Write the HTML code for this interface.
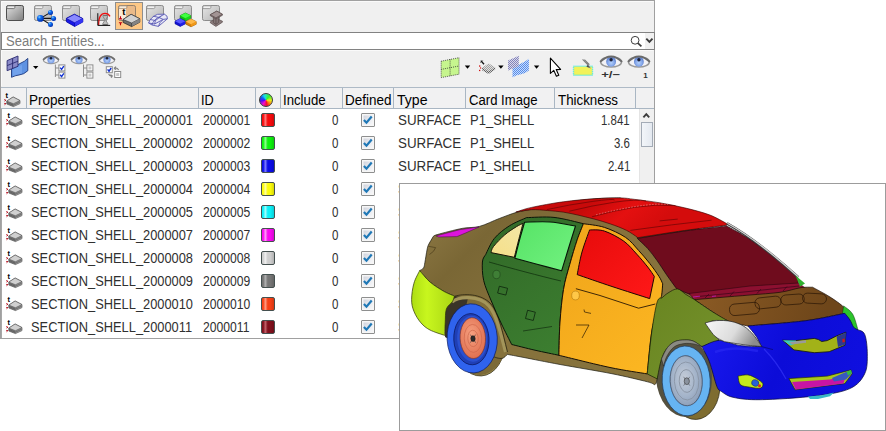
<!DOCTYPE html>
<html><head><meta charset="utf-8">
<style>
html,body{margin:0;padding:0;background:#fff;}
body{width:886px;height:431px;position:relative;overflow:hidden;font-family:"Liberation Sans",sans-serif;font-size:14px;color:#000;}
#panel{position:absolute;left:0;top:0;width:653px;height:337px;background:#f0f0f0;border:1px solid #a0a0a0;}
#search{position:absolute;left:1px;top:32px;width:652px;height:16px;background:#fff;border:1px solid #828282;}
#sdd{position:absolute;left:645px;top:33px;width:9px;height:16px;background:#f0f0f0;}
#hdr{position:absolute;left:1px;top:87px;width:653px;height:20px;background:#f1f1f2;border-top:1px solid #aebac6;border-bottom:1px solid #a9b6c3;}
.hs{position:absolute;top:88px;height:20px;width:1px;background:#a9b6c3;}
#rows{position:absolute;left:1px;top:109px;width:637px;height:229px;background:#fff;border-left:1px solid #a8a8a8;}
#sb{position:absolute;left:639px;top:109px;width:15px;height:229px;background:#f0f0f0;border-left:1px solid #e4e4e4;box-sizing:border-box;}
#thumb{position:absolute;left:641px;top:122px;width:10px;height:23px;border:1px solid #a3abb6;background:linear-gradient(90deg,#f2f5f9,#e4e9f0);}
.t{position:absolute;white-space:nowrap;line-height:20px;height:20px;transform-origin:0 0;}
.rt{color:#303030;}
.sw{position:absolute;left:261px;width:12px;height:12px;border:1px solid #44504f;border-radius:2px;}
.cb{position:absolute;left:361px;width:12px;height:12px;border:1px solid #8e8f8f;border-radius:1px;background:linear-gradient(135deg,#c8ccd6 0%,#e6e8ee 50%,#fbfbfc 100%);box-shadow:inset 0 0 0 1.5px #f6f6f6;}
.cb svg{position:absolute;left:0;top:0;}
#car{position:absolute;left:399px;top:183px;width:485px;height:246px;background:#fff;border:1px solid #9c9c9c;overflow:hidden;}
#tb{position:absolute;left:0;top:0;}
#cw{position:absolute;left:259px;top:93px;width:12px;height:12px;border:1px solid #3c3c3c;border-radius:50%;background:conic-gradient(#30e8a0 0deg,#30f030 40deg,#e8f020 95deg,#ff8010 135deg,#f01030 170deg,#f010d0 215deg,#5010f0 260deg,#1060f0 300deg,#10d8f0 335deg,#30e8a0 360deg);}
</style></head><body>
<div id="panel"></div>
<div id="search"></div><div id="sdd"></div>
<span class="t" style="left:5.57px;top:31px;transform:scaleX(0.9308);color:#7c7c7c;">Search Entities...</span>
<div id="hdr"></div>
<div class="hs" style="left:26px"></div>
<div class="hs" style="left:198px"></div>
<div class="hs" style="left:255px"></div>
<div class="hs" style="left:280px"></div>
<div class="hs" style="left:342px"></div>
<div class="hs" style="left:393px"></div>
<div class="hs" style="left:465px"></div>
<div class="hs" style="left:554px"></div>
<div class="hs" style="left:635px"></div>
<span class="t" style="left:28.58px;top:90px;transform:scaleX(0.9659);">Properties</span>
<span class="t" style="left:200.79px;top:90px;transform:scaleX(0.9077);">ID</span>
<span class="t" style="left:282.56px;top:90px;transform:scaleX(0.9432);">Include</span>
<span class="t" style="left:345.04px;top:90px;transform:scaleX(0.9628);">Defined</span>
<span class="t" style="left:396.95px;top:90px;transform:scaleX(1.0050);">Type</span>
<span class="t" style="left:468.50px;top:90px;transform:scaleX(0.9370);">Card Image</span>
<span class="t" style="left:558.10px;top:90px;transform:scaleX(0.9524);">Thickness</span>
<div id="rows"></div><div id="sb"></div><div id="thumb"></div>
<svg style="position:absolute;left:640px;top:110px" width="14" height="10" viewBox="640 110 14 10"><path d="M643.4 117.4 L646.3 114.2 L649.2 117.4" fill="none" stroke="#3c3c3c" stroke-width="1.9"/></svg>
<span class="t rt" style="left:30.78px;top:110px;transform:scaleX(0.9170);">SECTION_SHELL_2000001</span>
<span class="t rt" style="left:203.10px;top:110px;transform:scaleX(0.8685);">2000001</span>
<i class="sw" style="top:113px;background:linear-gradient(90deg,#f60a0c 0%,#f60a0c 10%,#ff7a7a 28%,#f60a0c 48%,#f60a0c 70%,#d3080a 100%)"></i>
<span class="t rt" style="left:331.90px;top:110px;transform:scaleX(0.8250);">0</span>
<i class="cb" style="top:113px"><svg width="12" height="12" viewBox="0 0 12 12"><path d="M1.9 5.9 L4.5 8.7 L9.7 2.5" fill="none" stroke="#1f78b6" stroke-width="2.2"/></svg></i>
<span class="t rt" style="left:397.54px;top:110px;transform:scaleX(0.9554);">SURFACE</span>
<span class="t rt" style="left:469.67px;top:110px;transform:scaleX(0.9287);">P1_SHELL</span>
<span class="t rt" style="left:601.43px;top:110px;transform:scaleX(0.8162);">1.841</span>
<span class="t rt" style="left:30.78px;top:133px;transform:scaleX(0.9170);">SECTION_SHELL_2000002</span>
<span class="t rt" style="left:203.10px;top:133px;transform:scaleX(0.8685);">2000002</span>
<i class="sw" style="top:136px;background:linear-gradient(90deg,#0cf00c 0%,#0cf00c 10%,#8cff8c 28%,#0cf00c 48%,#0cf00c 70%,#0ace0a 100%)"></i>
<span class="t rt" style="left:331.90px;top:133px;transform:scaleX(0.8250);">0</span>
<i class="cb" style="top:136px"><svg width="12" height="12" viewBox="0 0 12 12"><path d="M1.9 5.9 L4.5 8.7 L9.7 2.5" fill="none" stroke="#1f78b6" stroke-width="2.2"/></svg></i>
<span class="t rt" style="left:397.54px;top:133px;transform:scaleX(0.9554);">SURFACE</span>
<span class="t rt" style="left:469.67px;top:133px;transform:scaleX(0.9287);">P1_SHELL</span>
<span class="t rt" style="left:614.49px;top:133px;transform:scaleX(0.8162);">3.6</span>
<span class="t rt" style="left:30.78px;top:156px;transform:scaleX(0.9170);">SECTION_SHELL_2000003</span>
<span class="t rt" style="left:203.10px;top:156px;transform:scaleX(0.8685);">2000003</span>
<i class="sw" style="top:159px;background:linear-gradient(90deg,#0a0ce6 0%,#0a0ce6 10%,#7a7aff 28%,#0a0ce6 48%,#0a0ce6 70%,#080ac5 100%)"></i>
<span class="t rt" style="left:331.90px;top:156px;transform:scaleX(0.8250);">0</span>
<i class="cb" style="top:159px"><svg width="12" height="12" viewBox="0 0 12 12"><path d="M1.9 5.9 L4.5 8.7 L9.7 2.5" fill="none" stroke="#1f78b6" stroke-width="2.2"/></svg></i>
<span class="t rt" style="left:397.54px;top:156px;transform:scaleX(0.9554);">SURFACE</span>
<span class="t rt" style="left:469.67px;top:156px;transform:scaleX(0.9287);">P1_SHELL</span>
<span class="t rt" style="left:607.96px;top:156px;transform:scaleX(0.8162);">2.41</span>
<span class="t rt" style="left:30.78px;top:179px;transform:scaleX(0.9170);">SECTION_SHELL_2000004</span>
<span class="t rt" style="left:203.10px;top:179px;transform:scaleX(0.8685);">2000004</span>
<i class="sw" style="top:182px;background:linear-gradient(90deg,#fbfb0a 0%,#fbfb0a 10%,#ffffa0 28%,#fbfb0a 48%,#fbfb0a 70%,#d7d708 100%)"></i>
<span class="t rt" style="left:331.90px;top:179px;transform:scaleX(0.8250);">0</span>
<i class="cb" style="top:182px"><svg width="12" height="12" viewBox="0 0 12 12"><path d="M1.9 5.9 L4.5 8.7 L9.7 2.5" fill="none" stroke="#1f78b6" stroke-width="2.2"/></svg></i>
<span class="t rt" style="left:397.54px;top:179px;transform:scaleX(0.9554);">SURFACE</span>
<span class="t rt" style="left:469.67px;top:179px;transform:scaleX(0.9287);">P1_SHELL</span>
<span class="t rt" style="left:30.78px;top:202px;transform:scaleX(0.9170);">SECTION_SHELL_2000005</span>
<span class="t rt" style="left:203.10px;top:202px;transform:scaleX(0.8685);">2000005</span>
<i class="sw" style="top:205px;background:linear-gradient(90deg,#0af0f8 0%,#0af0f8 10%,#a0ffff 28%,#0af0f8 48%,#0af0f8 70%,#08ced5 100%)"></i>
<span class="t rt" style="left:331.90px;top:202px;transform:scaleX(0.8250);">0</span>
<i class="cb" style="top:205px"><svg width="12" height="12" viewBox="0 0 12 12"><path d="M1.9 5.9 L4.5 8.7 L9.7 2.5" fill="none" stroke="#1f78b6" stroke-width="2.2"/></svg></i>
<span class="t rt" style="left:397.54px;top:202px;transform:scaleX(0.9554);">SURFACE</span>
<span class="t rt" style="left:469.67px;top:202px;transform:scaleX(0.9287);">P1_SHELL</span>
<span class="t rt" style="left:30.78px;top:225px;transform:scaleX(0.9170);">SECTION_SHELL_2000007</span>
<span class="t rt" style="left:203.10px;top:225px;transform:scaleX(0.8685);">2000007</span>
<i class="sw" style="top:228px;background:linear-gradient(90deg,#f80af0 0%,#f80af0 10%,#ff9cf8 28%,#f80af0 48%,#f80af0 70%,#d508ce 100%)"></i>
<span class="t rt" style="left:331.90px;top:225px;transform:scaleX(0.8250);">0</span>
<i class="cb" style="top:228px"><svg width="12" height="12" viewBox="0 0 12 12"><path d="M1.9 5.9 L4.5 8.7 L9.7 2.5" fill="none" stroke="#1f78b6" stroke-width="2.2"/></svg></i>
<span class="t rt" style="left:397.54px;top:225px;transform:scaleX(0.9554);">SURFACE</span>
<span class="t rt" style="left:469.67px;top:225px;transform:scaleX(0.9287);">P1_SHELL</span>
<span class="t rt" style="left:30.78px;top:248px;transform:scaleX(0.9170);">SECTION_SHELL_2000008</span>
<span class="t rt" style="left:203.10px;top:248px;transform:scaleX(0.8685);">2000008</span>
<i class="sw" style="top:251px;background:linear-gradient(90deg,#cecece 0%,#cecece 10%,#f0f0f0 28%,#cecece 48%,#cecece 70%,#b1b1b1 100%)"></i>
<span class="t rt" style="left:331.90px;top:248px;transform:scaleX(0.8250);">0</span>
<i class="cb" style="top:251px"><svg width="12" height="12" viewBox="0 0 12 12"><path d="M1.9 5.9 L4.5 8.7 L9.7 2.5" fill="none" stroke="#1f78b6" stroke-width="2.2"/></svg></i>
<span class="t rt" style="left:397.54px;top:248px;transform:scaleX(0.9554);">SURFACE</span>
<span class="t rt" style="left:469.67px;top:248px;transform:scaleX(0.9287);">P1_SHELL</span>
<span class="t rt" style="left:30.78px;top:271px;transform:scaleX(0.9170);">SECTION_SHELL_2000009</span>
<span class="t rt" style="left:203.10px;top:271px;transform:scaleX(0.8685);">2000009</span>
<i class="sw" style="top:274px;background:linear-gradient(90deg,#767676 0%,#767676 10%,#b0b0b0 28%,#767676 48%,#767676 70%,#656565 100%)"></i>
<span class="t rt" style="left:331.90px;top:271px;transform:scaleX(0.8250);">0</span>
<i class="cb" style="top:274px"><svg width="12" height="12" viewBox="0 0 12 12"><path d="M1.9 5.9 L4.5 8.7 L9.7 2.5" fill="none" stroke="#1f78b6" stroke-width="2.2"/></svg></i>
<span class="t rt" style="left:397.54px;top:271px;transform:scaleX(0.9554);">SURFACE</span>
<span class="t rt" style="left:469.67px;top:271px;transform:scaleX(0.9287);">P1_SHELL</span>
<span class="t rt" style="left:30.78px;top:294px;transform:scaleX(0.9170);">SECTION_SHELL_2000010</span>
<span class="t rt" style="left:203.10px;top:294px;transform:scaleX(0.8685);">2000010</span>
<i class="sw" style="top:297px;background:linear-gradient(90deg,#f64016 0%,#f64016 10%,#ff9a80 28%,#f64016 48%,#f64016 70%,#d33712 100%)"></i>
<span class="t rt" style="left:331.90px;top:294px;transform:scaleX(0.8250);">0</span>
<i class="cb" style="top:297px"><svg width="12" height="12" viewBox="0 0 12 12"><path d="M1.9 5.9 L4.5 8.7 L9.7 2.5" fill="none" stroke="#1f78b6" stroke-width="2.2"/></svg></i>
<span class="t rt" style="left:397.54px;top:294px;transform:scaleX(0.9554);">SURFACE</span>
<span class="t rt" style="left:469.67px;top:294px;transform:scaleX(0.9287);">P1_SHELL</span>
<span class="t rt" style="left:30.78px;top:317px;transform:scaleX(0.9170);">SECTION_SHELL_2000011</span>
<span class="t rt" style="left:203.10px;top:317px;transform:scaleX(0.8685);">2000011</span>
<i class="sw" style="top:320px;background:linear-gradient(90deg,#80101c 0%,#80101c 10%,#c06068 28%,#80101c 48%,#80101c 70%,#6e0d18 100%)"></i>
<span class="t rt" style="left:331.90px;top:317px;transform:scaleX(0.8250);">0</span>
<i class="cb" style="top:320px"><svg width="12" height="12" viewBox="0 0 12 12"><path d="M1.9 5.9 L4.5 8.7 L9.7 2.5" fill="none" stroke="#1f78b6" stroke-width="2.2"/></svg></i>
<span class="t rt" style="left:397.54px;top:317px;transform:scaleX(0.9554);">SURFACE</span>
<span class="t rt" style="left:469.67px;top:317px;transform:scaleX(0.9287);">P1_SHELL</span>
<svg id="tb" width="655" height="87" viewBox="0 0 655 87">
<defs>
<linearGradient id="fg" x1="0" y1="0" x2="1" y2="1"><stop offset="0" stop-color="#e2e2e2"/><stop offset="1" stop-color="#7e7e7e"/></linearGradient>
<linearGradient id="ff" x1="0" y1="0" x2="1" y2="1"><stop offset="0" stop-color="#e6e6e6"/><stop offset="1" stop-color="#b4b4b4"/></linearGradient>
<radialGradient id="bs" cx="0.35" cy="0.3" r="0.7"><stop offset="0" stop-color="#7fd0ff"/><stop offset="0.35" stop-color="#1070f0"/><stop offset="1" stop-color="#0030b0"/></radialGradient>
<radialGradient id="iris" cx="0.5" cy="0.6" r="0.6"><stop offset="0" stop-color="#b4d0fa"/><stop offset="0.55" stop-color="#86a8ea"/><stop offset="1" stop-color="#4c70c4"/></radialGradient>
<g id="folder"><rect x="0.5" y="0.5" width="17" height="15" rx="1.8" fill="url(#fg)" stroke="#4e4e4e"/><path d="M0.8 3.6 H7.6 Q8.6 3.6 8.8 2.6 L9 0.8 H2 Q0.8 0.8 0.8 2 Z" fill="#ececec" stroke="#5a5a5a" stroke-width="0.8"/></g>
<g id="folderf"><rect x="0.5" y="0.5" width="17" height="15" rx="1.8" fill="url(#ff)" stroke="#8c8c8c"/><path d="M0.8 3.6 H7.6 Q8.6 3.6 8.8 2.6 L9 0.8 H2 Q0.8 0.8 0.8 2 Z" fill="#f2f2f2" stroke="#8a8a8a" stroke-width="0.8"/></g>
<g id="eye"><ellipse cx="0" cy="0" rx="7.6" ry="3.8" fill="#f2f2f6" stroke="#9a9a9a" stroke-width="1.2"/><circle cx="0" cy="-0.1" r="3.6" fill="url(#iris)"/><circle cx="0" cy="-1.7" r="1.3" fill="#1a2038"/><path d="M-8 0 Q-4 -3.9 0 -3.9 Q4 -3.9 8 0" fill="none" stroke="#6e6e6e" stroke-width="1.5"/></g>
<g id="eyeL"><ellipse cx="0" cy="0" rx="10.4" ry="5.2" fill="#f2f2f6" stroke="#9a9a9a" stroke-width="1.5"/><circle cx="0" cy="-0.1" r="4.9" fill="url(#iris)"/><circle cx="0" cy="-2.2" r="1.7" fill="#1a2038"/><path d="M-11 0 Q-5.5 -5.4 0 -5.4 Q5.5 -5.4 11 0" fill="none" stroke="#6a6a6a" stroke-width="1.9"/></g>
<g id="chk"><rect x="0.5" y="0.5" width="6" height="6" fill="#fff" stroke="#8c8c8c"/><path d="M1.8 3.2 L3.2 5 L5.4 1.8" fill="none" stroke="#1030d0" stroke-width="1.4"/></g>
<g id="unchk"><rect x="0.5" y="0.5" width="6" height="6" fill="#fff" stroke="#8c8c8c"/><rect x="2" y="2" width="3" height="3" fill="#c8c8c8"/></g>
<path id="dd" d="M0 0 H5.4 L2.7 3.2 Z" fill="#000"/>
<pattern id="dg" width="2" height="2" patternUnits="userSpaceOnUse"><rect width="2" height="2" fill="#d4d4d4"/><rect width="1" height="1" fill="#606060"/><rect x="1" y="1" width="1" height="1" fill="#606060"/></pattern>
<pattern id="dp" width="2" height="2" patternUnits="userSpaceOnUse"><rect width="2" height="2" fill="#d8d8ec"/><rect width="1" height="1" fill="#8484b8"/><rect x="1" y="1" width="1" height="1" fill="#8484b8"/></pattern>
<pattern id="db" width="2" height="2" patternUnits="userSpaceOnUse"><rect width="2" height="2" fill="#c4dcff"/><rect width="1" height="1" fill="#5a8ce6"/><rect x="1" y="1" width="1" height="1" fill="#5a8ce6"/></pattern>
</defs>
<path d="M1.5 31.5 V1.5 H653.5" fill="none" stroke="#fafafa"/>
<path d="M1.5 86 V50.5 H653.5" fill="none" stroke="#fafafa"/>
<use href="#folder" x="6" y="5"/>
<use href="#folderf" x="34" y="5"/>
<path d="M40.4 18.4 L50.5 12.4 M40.4 18.4 H53.6 M40.4 18.4 L50.5 24.5" stroke="#111" stroke-width="1.1"/>
<circle cx="40.4" cy="18.4" r="3.4" fill="url(#bs)"/><circle cx="50.5" cy="12.4" r="2.5" fill="url(#bs)"/><circle cx="53.6" cy="18.4" r="2.5" fill="url(#bs)"/><circle cx="50.5" cy="24.5" r="2.5" fill="url(#bs)"/>
<use href="#folderf" x="62" y="5"/>
<path d="M66.4 18.4 L74.4 14.3 L82.8 18.6 L82.8 22 L74.6 26.4 L66.4 21.8 Z" fill="#1818e6" stroke="#0000a0" stroke-width="0.8" stroke-linejoin="round"/>
<path d="M66.4 18.4 L74.4 14.3 L82.8 18.6 L74.6 22.8 Z" fill="#8a8aff" stroke="#0000a0" stroke-width="0.6" stroke-linejoin="round"/>
<path d="M74.6 22.8 L82.8 18.6 L82.8 22 L74.6 26.4 Z" fill="#3434f4"/><path d="M74.6 22.8 V26.4" stroke="#0000a0" stroke-width="0.6"/>
<use href="#folderf" x="90" y="5"/>
<path d="M103 15.4 H107.6 V16.4 L105.9 19.4 V20.6 L107.8 23.6 V24.8 H102.8 V23.6 L104.7 20.6 V19.4 L103 16.4 Z" fill="#c0c0c0" stroke="#7a7a7a" stroke-width="0.8"/><path d="M103.4 15.6 H107.2 M103.2 24.6 H107.4" stroke="#6a6a6a" stroke-width="0.9"/>
<path d="M98.6 25 C98.6 16 101.5 13.4 105 13.4 C107.5 13.4 109.2 14.8 110 16.4" fill="none" stroke="#f01010" stroke-width="1.3"/>
<path d="M97.8 13.2 V25.4 H110.2" fill="none" stroke="#111" stroke-width="1"/>
<rect x="115.5" y="2.5" width="27" height="27" fill="#fdc886" stroke="#8e8e8e"/>
<g opacity="0.9"><rect x="118.5" y="5.5" width="17" height="15" rx="1.8" fill="#e9b98a" stroke="#8a7a6a"/><path d="M118.8 8.6 H125.6 Q126.6 8.6 126.8 7.6 L127 5.8 H120 Q118.8 5.8 118.8 7 Z" fill="#f6efe6" stroke="#8a7a6a" stroke-width="0.8"/><rect x="119" y="8.8" width="7" height="11.2" fill="#fbf3ea" opacity="0.9"/></g>
<text x="122.2" y="15.2" font-family="Liberation Sans, sans-serif" font-weight="bold" font-size="9.5" fill="#000">t</text>
<path d="M120.5 16.2 V18.8 M118.9 18.9 H122.1 M118.9 22.7 H122.1 M120.5 22.8 V25.2" fill="none" stroke="#c00010" stroke-width="1.1"/>
<path d="M123.1 19.5 L131.1 14.3 L139.8 18.8 L139.8 22.2 L131.6 26.6 L123.1 22.4 Z" fill="#6e6e6e" stroke="#2e2e2e" stroke-width="0.8" stroke-linejoin="round"/>
<path d="M123.1 19.5 L131.1 14.3 L139.8 18.8 L131.6 23 Z" fill="#d2d2d2" stroke="#2e2e2e" stroke-width="0.6" stroke-linejoin="round"/>
<path d="M131.6 23 L139.8 18.8 L139.8 22.2 L131.6 26.6 Z" fill="#848484"/><path d="M131.6 23 V26.6" stroke="#2e2e2e" stroke-width="0.6"/>
<use href="#folderf" x="146" y="5"/>
<g fill="none" stroke="#5a5ab4" stroke-width="0.9" stroke-linejoin="round"><path d="M148.6 23 Q150.5 17 157.6 14.3 L164.4 14.2 Q168 15.6 167.4 18.8 L158.4 26.4 L152 25 Z" fill="#e8e8f6"/><path d="M152 25 Q153.2 19.6 160.4 16.4 L164.4 14.2 M158.4 26.4 Q159.6 22 163 19.6 M150 19.4 L155.4 20.6 L161.4 16 M153.4 16.2 L158.6 17.4 M148.6 23 L154.6 24 L163.2 19.4 L167.4 18.8 M155.4 20.6 L154.6 24 M158.6 17.4 L163.2 19.4"/></g>
<use href="#folderf" x="174" y="5"/>
<path d="M180.20000000000002 15.6 L185.4 13.0 L190.6 15.6 L190.6 18.2 L185.4 20.8 L180.20000000000002 18.2 Z" fill="#10c010" stroke="#087008" stroke-width="0.6" stroke-linejoin="round"/><path d="M185.4 18.2 L190.6 15.6 L190.6 18.2 L185.4 20.8 Z" fill="#18d818"/><path d="M180.20000000000002 15.6 L185.4 13.0 L190.6 15.6 L185.4 18.2 Z" fill="#40ff40"/>
<path d="M175.0 21.2 L180.2 18.599999999999998 L185.39999999999998 21.2 L185.39999999999998 23.8 L180.2 26.400000000000002 L175.0 23.8 Z" fill="#1010d0" stroke="#000090" stroke-width="0.6" stroke-linejoin="round"/><path d="M180.2 23.8 L185.39999999999998 21.2 L185.39999999999998 23.8 L180.2 26.400000000000002 Z" fill="#2020e8"/><path d="M175.0 21.2 L180.2 18.599999999999998 L185.39999999999998 21.2 L180.2 23.8 Z" fill="#5858ff"/>
<path d="M185.8 21.6 L191 19.0 L196.2 21.6 L196.2 24.200000000000003 L191 26.800000000000004 L185.8 24.200000000000003 Z" fill="#d88008" stroke="#905000" stroke-width="0.6" stroke-linejoin="round"/><path d="M191 24.200000000000003 L196.2 21.6 L196.2 24.200000000000003 L191 26.800000000000004 Z" fill="#f09818"/><path d="M185.8 21.6 L191 19.0 L196.2 21.6 L191 24.200000000000003 Z" fill="#ffb848"/>
<use href="#folderf" x="202" y="5"/>
<g stroke="#5a4c4c" stroke-width="0.7" stroke-linejoin="round"><path d="M210.3 21.8 L216.6 18.6 L222.4 21.2 V22.2 L215.9 26.4 L210.3 22.8 Z" fill="#8c7e7e"/><path d="M213.4 16.4 V22.8 L215.9 24.4 L218.6 22.6 V16.4 Z" fill="#837676"/><path d="M215.9 18 V24.4" fill="none"/><path d="M210.3 14.7 L216.8 11.1 L222.4 14.3 V15.3 L215.9 18.8 L210.3 15.7 Z" fill="#8c7e7e"/><path d="M210.3 14.7 L216.8 11.1 L222.4 14.3 L215.9 17.8 Z" fill="#a29494"/></g>
<circle cx="635.1" cy="40.3" r="3.9" fill="none" stroke="#3c3c3c" stroke-width="1"/><path d="M637.9 43.2 L641.4 46.4" stroke="#3c3c3c" stroke-width="1.7"/>
<path d="M646.3 38.6 L649.4 41.8 L652.5 38.6" fill="none" stroke="#3a3a3a" stroke-width="1.9"/>
<path d="M11.5 69 Q16 65.5 20 63.5 Q25 61.5 27.8 58.4 V70.7 Q24 74.5 19 75 Q15 75.5 11.5 77.3 Z" fill="#5e92e2" stroke="#1e3a80" stroke-width="0.9" stroke-linejoin="round"/>
<path d="M13 69.5 Q18 66 22 65 V73.6 Q17 74.4 13 76 Z" fill="#7aaaf0" opacity="0.7"/>
<path d="M7.1 60.6 L18 56 V66.3 L7.1 70.7 Z" fill="#8a8ac8" stroke="#2a2a70" stroke-width="0.9" stroke-linejoin="round"/><path d="M12.6 58.3 V68.5 M7.1 65.6 L18 61.2" stroke="#2a2a70" stroke-width="0.9"/>
<use href="#dd" x="33" y="65.9"/>
<use href="#eye" x="51" y="59.9"/><path d="M55.4 64.5 V77 M55.4 68 H59 M55.4 75 H59" stroke="#8c8c8c" stroke-width="1" fill="none"/><use href="#chk" x="58.4" y="64.4"/><use href="#chk" x="58.4" y="71.6"/>
<use href="#eye" x="79" y="59.9"/><path d="M83.5 64.5 V77 M83.5 68 H87 M83.5 75 H87" stroke="#8c8c8c" stroke-width="1" fill="none"/><use href="#unchk" x="86.4" y="64.4"/><use href="#unchk" x="86.4" y="71.6"/>
<use href="#eye" x="107" y="59.9"/><use href="#chk" x="105.8" y="66.2"/><use href="#unchk" x="114.2" y="71"/>
<path d="M114 68.4 Q117 67 118.6 70 M114 68.4 L116 66.6 M114 68.4 L116.2 69.6 M112.6 76 Q109.6 76.6 108.6 74 M112.6 76 L110.4 74.6 M112.6 76 L111 77.6" fill="none" stroke="#808080" stroke-width="1.1"/>
<path d="M441.2 61.2 L459 57.7 V74.2 L441.2 77.6 Z" fill="#c6f58e"/><path d="M441.2 61.2 L459 57.7 V74.2 L441.2 77.6 Z M450.1 59.4 V75.9 M441.2 69.4 L459 66" fill="none" stroke="#333" stroke-width="0.8" stroke-dasharray="1 1"/>
<use href="#dd" x="464.8" y="65.5"/>
<path d="M482 68 L488.6 63.6 L495.2 67.4 V69.6 L488.6 74 L482 70.2 Z" fill="url(#dg)"/><path d="M482 68 L488.6 63.6 L495.2 67.4 L488.6 71.4 Z" fill="#f0f0f0" opacity="0.45"/>
<path d="M480.8 60.6 L484 64.2" stroke="#111" stroke-width="1.3"/><path d="M480.6 62.6 L482.6 60.6" stroke="#111" stroke-width="0.9"/><rect x="479" y="65.4" width="1.3" height="1.3" fill="#d01010"/><rect x="480" y="67.4" width="1.2" height="1.2" fill="#d01010"/><rect x="479" y="69.8" width="1.3" height="1.3" fill="#d01010"/>
<use href="#dd" x="498.2" y="65.5"/>
<path d="M512.5 68.6 Q517 65 521 63.4 Q526 61.4 528.9 58.8 V70.4 Q525 74 520 74.6 Q516 75.2 512.5 77.4 Z" fill="url(#db)"/>
<path d="M508 60.4 L518.8 55.8 V66.2 L508 70.6 Z" fill="url(#dp)"/>
<use href="#dd" x="533.9" y="65.5"/>
<path d="M550.4 58.2 V73.4 L553.8 70.4 L556.4 76.2 L558.8 75.2 L556.2 69.6 L560.6 69.4 Z" fill="#fff" stroke="#000" stroke-width="1.1" stroke-linejoin="round"/>
<rect x="573.5" y="66.3" width="19" height="9" fill="#f2f25a" stroke="#40e8f0" stroke-width="1.4" stroke-dasharray="1 1"/>
<path d="M582.6 59.4 L588.4 65.4 M584.4 59.6 L589.4 64.6 M586.4 62.4 L589.6 67.4 L587 66.4" fill="none" stroke="#808080" stroke-width="1.1"/><path d="M587.4 65 L589.6 67.6 L586.4 66.6 Z" fill="#404040"/>
<use href="#eyeL" x="611.1" y="61.9"/><use href="#eyeL" x="638.9" y="61.9"/>
<text x="601.2" y="78.4" font-family="Liberation Sans, sans-serif" font-weight="bold" font-size="9.5" fill="#333" textLength="19" lengthAdjust="spacingAndGlyphs">+/−</text>
<text x="643.2" y="78" font-family="Liberation Sans, sans-serif" font-weight="bold" font-size="8" fill="#333">1</text>
</svg>
<svg style="position:absolute;left:0;top:88px" width="30" height="250" viewBox="0 88 30 250"><defs><g id="pi"><text x="1.6" y="4.2" font-family="Liberation Sans, sans-serif" font-weight="bold" font-size="7.5" fill="#000">t</text><path d="M0.2 5.6 L1.9 6.2 L0.6 7.2 M0.2 9.4 L1.9 9.6 L0.5 10.8" fill="none" stroke="#b00010" stroke-width="0.9"/><path d="M2.8 7.1 L9.1 3 L16 6.6 V9.6 L9.4 12.6 L2.8 10 Z" fill="#787878" stroke="#404040" stroke-width="0.6" stroke-linejoin="round"/><path d="M9.4 9.7 L16 6.6 V9.6 L9.4 12.6 Z" fill="#929292"/><path d="M2.8 7.1 L9.1 3 L16 6.6 L9.4 9.7 Z" fill="#d0d0d0" stroke="#4a4a4a" stroke-width="0.5" stroke-linejoin="round"/><path d="M3 8.6 L9.4 11.2 L15.9 8.1" fill="none" stroke="#4a4a4a" stroke-width="0.5"/></g></defs><use href="#pi" x="4" y="94"/><use href="#pi" x="6" y="114"/><use href="#pi" x="6" y="137"/><use href="#pi" x="6" y="160"/><use href="#pi" x="6" y="183"/><use href="#pi" x="6" y="206"/><use href="#pi" x="6" y="229"/><use href="#pi" x="6" y="252"/><use href="#pi" x="6" y="275"/><use href="#pi" x="6" y="298"/><use href="#pi" x="6" y="321"/></svg>
<div id="cw"></div>
<div id="car"><svg style="position:absolute;left:0;top:0" width="485" height="246" viewBox="400 184 485 246"><defs>
<linearGradient id="gBody" x1="420" y1="230" x2="520" y2="330" gradientUnits="userSpaceOnUse"><stop offset="0" stop-color="#8a7642"/><stop offset="0.35" stop-color="#7a6735"/><stop offset="1" stop-color="#86723c"/></linearGradient>
<linearGradient id="gRoof" x1="600" y1="195" x2="640" y2="240" gradientUnits="userSpaceOnUse"><stop offset="0" stop-color="#c80a0a"/><stop offset="0.5" stop-color="#e41010"/><stop offset="1" stop-color="#d40c0c"/></linearGradient>
<linearGradient id="gHood" x1="700" y1="290" x2="820" y2="330" gradientUnits="userSpaceOnUse"><stop offset="0" stop-color="#8a5a24"/><stop offset="1" stop-color="#6e461a"/></linearGradient>
<linearGradient id="gBump" x1="412" y1="300" x2="455" y2="300" gradientUnits="userSpaceOnUse"><stop offset="0" stop-color="#aede14"/><stop offset="0.35" stop-color="#c8f61e"/><stop offset="1" stop-color="#a8d414"/></linearGradient>
<linearGradient id="gQG" x1="495" y1="255" x2="522" y2="225" gradientUnits="userSpaceOnUse"><stop offset="0" stop-color="#f6e08a"/><stop offset="1" stop-color="#f2e6a6"/></linearGradient>
<linearGradient id="gRD" x1="490" y1="250" x2="560" y2="350" gradientUnits="userSpaceOnUse"><stop offset="0" stop-color="#336c29"/><stop offset="1" stop-color="#3c7e30"/></linearGradient>
<linearGradient id="gRW" x1="520" y1="225" x2="565" y2="270" gradientUnits="userSpaceOnUse"><stop offset="0" stop-color="#58e468"/><stop offset="1" stop-color="#70f07e"/></linearGradient>
<linearGradient id="gFD" x1="560" y1="280" x2="660" y2="380" gradientUnits="userSpaceOnUse"><stop offset="0" stop-color="#f2a81c"/><stop offset="1" stop-color="#fdb822"/></linearGradient>
<linearGradient id="gFG" x1="585" y1="230" x2="650" y2="300" gradientUnits="userSpaceOnUse"><stop offset="0" stop-color="#e80c0c"/><stop offset="1" stop-color="#ff1818"/></linearGradient>
<linearGradient id="gFen" x1="660" y1="295" x2="720" y2="345" gradientUnits="userSpaceOnUse"><stop offset="0" stop-color="#6a8622"/><stop offset="1" stop-color="#73902a"/></linearGradient>
<linearGradient id="gFB" x1="700" y1="330" x2="860" y2="400" gradientUnits="userSpaceOnUse"><stop offset="0" stop-color="#1a1af0"/><stop offset="0.5" stop-color="#0c0cd8"/><stop offset="1" stop-color="#1010e0"/></linearGradient>
<linearGradient id="gHL" x1="710" y1="322" x2="750" y2="348" gradientUnits="userSpaceOnUse"><stop offset="0" stop-color="#f4f4f4"/><stop offset="0.55" stop-color="#dcdcdc"/><stop offset="1" stop-color="#8c8c8c"/></linearGradient>
<radialGradient id="gHubR" cx="0.45" cy="0.4" r="0.6"><stop offset="0" stop-color="#f6a080"/><stop offset="1" stop-color="#e07050"/></radialGradient>
<radialGradient id="gHubF" cx="0.45" cy="0.45" r="0.6"><stop offset="0" stop-color="#c4ccd8"/><stop offset="0.6" stop-color="#a4b4ca"/><stop offset="1" stop-color="#8a9cb6"/></radialGradient>
</defs><ellipse cx="479.5" cy="341" rx="25.5" ry="35" transform="rotate(-3 479.5 341)" fill="#9a8a48" stroke="#2a2410" stroke-width="0.7" />
<ellipse cx="694.5" cy="384" rx="25.5" ry="35.5" transform="rotate(-3 694.5 384)" fill="#7e6c30" stroke="#2a2410" stroke-width="0.7" />
<ellipse cx="478" cy="335" rx="29" ry="40" transform="rotate(-4 478 335)" fill="#7c6a38" />
<ellipse cx="684" cy="377" rx="28" ry="40" transform="rotate(-4 684 377)" fill="#55513f" />
<path d="M433.2 236.6L433.2 236.6C433.9 236.3 432.4 236.0 437.2 234.6C442.0 233.2 455.1 229.8 462.1 228.4C469.2 227.0 473.3 228.1 479.5 226.4C485.7 224.8 493.1 220.8 499.3 218.5C505.5 216.2 511.3 213.8 516.7 212.3C522.1 210.8 526.2 210.3 531.6 209.3C537.0 208.3 542.0 207.5 549.0 206.1C556.0 204.7 565.5 202.3 573.8 201.1C582.1 199.8 591.0 199.1 598.7 198.6C606.4 198.1 616.5 198.0 620.0 197.9L620.0 197.9C633.3 203.2 686.2 213.2 700.0 230.0C713.8 246.8 708.8 287.0 703.0 299.0C697.2 311.0 672.6 288.7 665.0 302.0C657.4 315.3 658.5 366.1 657.2 378.9L657.2 378.9C656.8 379.8 656.6 384.0 655.0 384.5C653.4 385.0 654.7 383.6 647.5 381.8C640.3 380.0 626.5 376.6 611.9 373.7C597.3 370.8 574.8 367.2 560.1 364.5C545.5 361.8 532.8 359.2 524.0 357.5C515.2 355.8 510.1 354.9 507.3 354.4L507.3 354.4C506.2 355.1 504.2 358.7 501.0 358.5C497.8 358.3 493.2 357.4 488.0 353.0C482.8 348.6 475.8 341.6 470.0 332.0C464.2 322.4 456.2 301.8 453.4 295.7L453.4 295.7C451.8 295.0 448.0 293.8 444.1 291.5C440.2 289.2 434.3 285.7 430.2 282.2C426.1 278.7 421.4 272.5 419.7 270.6L419.7 270.6C420.3 270.2 422.6 269.4 423.5 268.0C424.4 266.6 424.3 265.4 424.9 262.4C425.5 259.4 426.4 252.9 427.0 250.0C427.6 247.1 427.4 247.2 428.4 245.0C429.4 242.8 432.4 238.0 433.2 236.6Z" fill="url(#gBody)" stroke="#1a1a10" stroke-width="0.7" stroke-linejoin="round" />
<path d="M436.0 235.9L459.7 229.7L479.2 226.9L465.3 233.1L456.9 236.6L438.8 237.0Z" fill="#dc14dc" stroke="#400840" stroke-width="0.5" stroke-linejoin="round" />
<path d="M428.4 246.3 L435.6 247.6 Q434.5 251.5 429.5 254.5" fill="none" stroke="#4a3c1a" stroke-width="0.7"/>
<path d="M515.8 212.1L515.8 212.1C518.4 211.3 523.7 209.1 531.6 207.4C539.5 205.7 552.7 203.2 563.2 201.8C573.7 200.4 585.3 199.3 594.8 198.7C604.3 198.0 613.3 197.8 620.0 197.9C626.7 198.0 628.2 198.6 634.8 199.4C641.4 200.2 651.4 201.4 659.7 202.8C668.0 204.2 676.2 205.8 684.5 207.8C692.8 209.8 702.3 212.2 709.3 214.8C716.3 217.4 723.8 222.1 726.7 223.5L726.7 225.2C719.7 226.1 699.5 228.4 684.5 230.5C669.5 232.6 644.9 236.6 637.0 237.8L637.2 237.1C635.4 236.0 630.8 232.5 626.4 230.3C622.0 228.1 615.9 225.8 610.6 224.0C605.3 222.2 600.1 220.6 594.8 219.2C589.5 217.8 584.3 216.5 579.0 215.3C573.7 214.1 568.5 212.9 563.2 212.1C557.9 211.3 552.7 210.9 547.4 210.5C542.1 210.1 536.9 209.4 531.6 209.7C526.3 210.0 518.4 211.7 515.8 212.1Z" fill="url(#gRoof)" stroke="#300000" stroke-width="0.6" stroke-linejoin="round" />
<g fill="none" stroke="#6a0404" stroke-width="0.7"><path d="M546.8 209.6 Q570 204.5 591.9 201.5 T614.5 199.9"/><path d="M569.3 211.2 Q592 205.5 614.5 202.2 T646 201"/><path d="M591.9 216.8 Q614 210.5 634.8 207.3 T675.4 205.5"/><path d="M630.3 230.4 Q672 224.5 711.6 220.2"/><path d="M659.6 220.9 L677.7 219.1"/></g>
<path d="M596 214.8 Q617 209.3 637 206.3 T668 204.4" fill="none" stroke="#e8a0a0" stroke-width="0.6" stroke-dasharray="1.5 1.5"/>
<path d="M637.3 238.4L637.3 238.4C645.2 237.2 669.6 233.1 684.5 231.0C699.4 228.9 719.7 226.8 726.7 225.9L726.7 225.9C730.4 228.0 741.5 233.7 749.0 238.6C756.5 243.5 763.7 249.2 771.4 255.2C779.1 261.2 790.6 270.0 795.1 274.8C799.6 279.6 797.9 282.5 798.5 284.0L798.5 284.0C790.4 284.6 768.0 285.7 750.0 287.5C732.0 289.3 700.7 293.5 690.8 294.7L690.8 294.7L677.5 289.4L677.5 289.4C677.2 289.1 677.6 290.0 675.7 287.5C673.9 285.0 669.5 279.0 666.4 274.5C663.3 270.0 660.2 264.9 657.1 260.6C654.0 256.3 651.1 252.3 647.8 248.6C644.5 244.9 639.0 240.1 637.3 238.4Z" fill="#6f0c1d" stroke="#16040a" stroke-width="0.7" stroke-linejoin="round" />
<path d="M727 223.4 C749 235.6 771.4 253 798.2 277.3" fill="none" stroke="#3a3a3a" stroke-width="2.6"/><path d="M727.4 223.2 C749.4 235.4 771.8 252.8 798.4 277" fill="none" stroke="#d4d4d4" stroke-width="1.3"/>
<path d="M689.0 293.5L750.0 286.0L798.5 283.0L806.0 288.5L780.0 293.0L750.0 295.6L720.0 298.0L694.6 299.9Z" fill="#8c1030" stroke="#20040a" stroke-width="0.5" stroke-linejoin="round" />
<path d="M697 296.6 L752 291.2 L799 286 M705 298 L709 294 M730 296 L734 291.5 M757 293.5 L761 289 M783 291 L787 286.5" fill="none" stroke="#3a0618" stroke-width="0.7"/>
<path d="M693 297 L700 296.2 M712 296.4 L716 296" stroke="#c020c0" stroke-width="0.8"/>
<path d="M795.5 275.5L805.0 283.5L800.0 286.5Z" fill="#30b030" />
<path d="M694.6 299.7L694.6 299.7C698.8 299.3 710.8 298.3 720.0 297.5C729.2 296.7 740.0 295.9 750.0 295.0C760.0 294.1 771.6 293.5 780.0 292.3C788.4 291.1 794.7 288.7 800.1 287.8C805.5 286.9 810.4 287.3 812.5 287.2L812.5 287.2C815.4 288.8 824.8 293.7 830.0 297.0C835.2 300.3 841.1 304.4 843.6 307.1C846.1 309.8 844.6 312.3 844.8 313.3L844.8 313.3C838.2 314.6 821.2 318.7 805.1 320.8C789.0 322.9 757.4 325.1 747.9 326.0L747.9 326.0C744.6 325.2 734.1 323.4 728.1 321.0C722.1 318.6 717.6 315.1 712.0 311.5C706.4 307.9 697.5 301.7 694.6 299.7Z" fill="url(#gHood)" stroke="#1a0c04" stroke-width="0.7" stroke-linejoin="round" />
<rect x="729.5" y="303.2" width="30" height="11.5" rx="5" transform="rotate(-5 744.5 309)" fill="none" stroke="#2a1606" stroke-width="0.7"/>
<rect x="755.0" y="297.0" width="26" height="11" rx="5" transform="rotate(-6 768 302.5)" fill="none" stroke="#2a1606" stroke-width="0.7"/>
<rect x="780.8" y="294.5" width="23.5" height="10" rx="5" transform="rotate(-4 792.5 299.5)" fill="none" stroke="#2a1606" stroke-width="0.7"/>
<rect x="802.5" y="293.5" width="24" height="10" rx="5" transform="rotate(3 814.5 298.5)" fill="none" stroke="#2a1606" stroke-width="0.7"/>
<path d="M843.6 305.9L843.6 305.9C845.1 307.2 850.2 310.0 852.6 314.0C855.0 318.0 857.1 327.2 858.0 329.8L858.0 329.8C857.1 329.8 854.4 331.9 852.6 330.0C850.8 328.1 848.7 321.4 847.0 318.5C845.3 315.6 843.3 313.5 842.6 312.5Z" fill="#2cc42c" stroke="#083008" stroke-width="0.5" stroke-linejoin="round" />
<path d="M444.5 301.0L454.5 296.1L468.0 298.0L464.0 315.0L454.0 342.0L445.0 337.0Z" fill="#3a3428" />
<path d="M452 302 C458 296.5 479 294.5 489 306 C496.5 315 500.5 333 505.5 352" fill="none" stroke="#a3955a" stroke-width="3.2"/>
<path d="M454.5 296.3 C463 293.6 481 293 491 304 C499 313.5 502.5 332 507.5 352" fill="none" stroke="#2a2410" stroke-width="0.8"/>
<ellipse cx="472.2" cy="338.4" rx="25.1" ry="34.6" transform="rotate(-3 472.2 338.4)" fill="#2f63ee" stroke="#0a1a60" stroke-width="0.7" />
<ellipse cx="471.4" cy="339.2" rx="17.6" ry="25.6" transform="rotate(-3 471.4 339.2)" fill="#1f3fb6" stroke="#0c1a66" stroke-width="0.8" />
<ellipse cx="472.2" cy="338.8" rx="15" ry="23" transform="rotate(-3 472.2 338.8)" fill="#2a50d0" />
<ellipse cx="472.8" cy="338.1" rx="12.7" ry="20.4" transform="rotate(-3 472.8 338.1)" fill="url(#gHubR)" stroke="#7a3020" stroke-width="0.6" />
<ellipse cx="473" cy="338.4" rx="8.8" ry="14" transform="rotate(-3 473 338.4)" fill="none" stroke="#d0664a" stroke-width="0.7" />
<ellipse cx="473" cy="338.4" rx="5.2" ry="8.2" transform="rotate(-3 473 338.4)" fill="none" stroke="#c86044" stroke-width="0.6" />
<path d="M470.4 334.6 L475.6 342.6 M475.6 334.6 L470.4 342.6" stroke="#444" stroke-width="0.7"/>
<ellipse cx="473" cy="338.6" rx="2.2" ry="2.9" transform="rotate(-3 473 338.6)" fill="#2a2a2a" stroke="#111" stroke-width="0.5" />
<path d="M419.7 270.6L419.7 270.6C418.7 272.7 415.2 278.6 413.9 283.4C412.5 288.2 411.6 295.0 411.6 299.6C411.6 304.2 412.3 307.3 413.9 311.2C415.4 315.1 418.2 319.7 420.9 322.8C423.6 325.9 426.0 327.9 430.0 330.0C434.0 332.1 442.2 334.5 444.7 335.4L444.7 335.4C444.8 333.3 444.9 327.2 445.2 322.8C445.5 318.4 445.2 312.4 446.4 308.9C447.6 305.4 450.8 304.0 452.2 301.9C453.6 299.8 454.1 297.1 454.5 296.1L454.5 296.1C452.8 295.3 448.2 293.8 444.1 291.5C440.1 289.2 434.3 285.7 430.2 282.2C426.1 278.7 421.4 272.5 419.7 270.6Z" fill="url(#gBump)" stroke="#2a3004" stroke-width="0.7" stroke-linejoin="round" />
<path d="M485.7 254.5L485.7 254.5C487.1 251.8 490.5 243.2 494.4 238.4C498.3 233.6 503.9 229.4 509.3 225.9C514.7 222.4 523.7 219.0 526.6 217.6L526.6 217.6C531.2 217.6 544.5 216.4 554.0 217.4C563.5 218.4 578.5 222.6 583.4 223.7L583.4 223.7C582.4 226.4 579.5 233.0 577.2 239.8C574.9 246.6 572.0 256.4 569.7 264.7C567.4 273.0 565.1 279.9 563.5 289.5C561.9 299.1 560.8 311.0 560.0 322.0C559.2 333.0 559.1 349.8 558.9 355.3L558.9 355.3C554.9 354.4 542.9 352.0 535.0 350.2C527.1 348.4 515.6 345.4 511.7 344.5L511.7 344.5C510.0 341.1 504.9 331.2 501.5 324.0C498.1 316.8 494.3 308.2 491.3 301.0C488.3 293.8 485.2 287.1 483.7 280.6C482.2 274.1 482.1 266.4 482.4 262.0C482.7 257.6 485.1 255.8 485.7 254.5Z" fill="url(#gRD)" stroke="#0a1408" stroke-width="1.0" stroke-linejoin="round" />
<path d="M491.0 252.6L491.0 252.6C491.4 251.6 491.2 249.5 493.5 246.5C495.8 243.5 501.0 238.1 504.8 234.8C508.6 231.5 513.4 228.6 516.4 226.7C519.4 224.8 521.9 223.9 523.0 223.4L523.0 223.4C522.2 226.3 519.9 235.3 518.4 241.0C516.9 246.7 515.0 254.6 514.3 257.3L514.3 257.3L491.0 252.6Z" fill="url(#gQG)" stroke="#1a1608" stroke-width="1.0" stroke-linejoin="round" />
<path d="M524.6 222.2L524.6 222.2C528.8 222.2 541.5 221.4 550.0 222.0C558.5 222.6 571.2 225.3 575.5 226.0L575.5 226.0C574.2 230.0 570.3 242.5 568.0 250.0C565.7 257.5 562.7 267.3 561.6 270.8L561.6 270.8C557.7 269.8 545.8 266.6 538.0 264.5C530.2 262.4 518.8 259.2 514.9 258.2L514.9 258.2C515.7 255.2 517.9 246.0 519.5 240.0C521.1 234.0 523.8 225.2 524.6 222.2Z" fill="url(#gRW)" stroke="#081408" stroke-width="1.1" stroke-linejoin="round" />
<path d="M583.4 223.7L583.4 223.7C586.9 224.3 597.5 225.1 604.5 227.4C611.5 229.7 619.9 233.6 625.6 237.4C631.3 241.2 634.6 246.1 638.6 250.4C642.6 254.7 646.3 259.1 649.7 263.4C653.1 267.7 656.8 273.0 659.0 276.4C661.2 279.8 662.1 282.6 662.7 283.8L662.7 283.8C662.5 285.6 662.2 292.0 661.7 294.9C661.2 297.8 661.5 295.5 659.9 301.4C658.3 307.2 654.1 317.9 652.0 330.0C649.9 342.1 648.0 366.6 647.2 373.9L647.2 373.9C641.0 372.8 624.7 370.6 610.0 367.5C595.3 364.4 567.4 357.3 558.9 355.3L558.9 355.3C559.1 349.8 559.2 333.0 560.0 322.0C560.8 311.0 561.9 299.1 563.5 289.5C565.1 279.9 567.4 273.0 569.7 264.7C572.0 256.4 574.9 246.6 577.2 239.8C579.5 233.0 582.4 226.4 583.4 223.7Z" fill="url(#gFD)" stroke="#1a1004" stroke-width="1.0" stroke-linejoin="round" />
<path d="M589.6 229.9L589.6 229.9C592.1 230.1 598.8 229.2 604.5 231.1C610.2 233.0 618.3 237.3 623.7 241.1C629.1 244.9 632.7 249.8 636.7 254.1C640.7 258.4 644.9 263.4 647.8 267.1C650.7 270.8 653.2 274.8 654.3 276.4L654.3 276.4L649.7 298.6L649.7 298.6C643.4 296.6 624.1 290.5 612.0 286.5C599.9 282.5 583.0 276.6 577.2 274.6L577.2 274.6C578.0 270.8 579.9 259.4 582.0 252.0C584.1 244.6 588.3 233.6 589.6 229.9Z" fill="url(#gFG)" stroke="#200404" stroke-width="1.0" stroke-linejoin="round" />
<path d="M575.9 288.7 L600 295.5 L638.6 308.2 L655.3 304" fill="none" stroke="#2a1804" stroke-width="0.9"/>
<path d="M489 262 C510 268 540 276 561 281" fill="none" stroke="#0c2a0a" stroke-width="0.7"/>
<path d="M661.9 297.9L661.9 297.9C662.9 297.1 665.4 294.5 668.0 293.0C670.6 291.5 674.4 288.6 677.4 288.9C680.4 289.1 683.1 292.7 686.0 294.5C688.9 296.3 693.2 298.8 694.6 299.7L694.6 299.7C697.5 301.7 706.4 307.9 712.0 311.5C717.6 315.1 725.4 319.4 728.1 321.0L728.1 321.0C725.9 320.9 718.5 320.2 715.0 320.5C711.5 320.8 708.2 322.6 706.8 323.0L706.8 323.0C707.7 324.5 709.9 329.1 712.0 332.0C714.1 334.9 718.1 339.0 719.3 340.4L719.3 340.4L701.9 346.6L701.9 346.6C700.4 345.7 695.9 342.1 693.0 341.0C690.1 339.9 687.5 339.9 684.5 340.0C681.5 340.1 677.8 340.2 675.0 341.5C672.2 342.8 669.8 344.6 667.5 347.5C665.2 350.4 663.2 353.8 661.5 359.0C659.8 364.2 657.9 375.6 657.2 378.9L657.2 378.9L647.2 373.9L647.2 373.9C648.0 366.6 650.3 342.0 652.0 330.0C653.7 318.0 655.6 307.2 657.2 301.9C658.9 296.5 661.1 298.6 661.9 297.9Z" fill="url(#gFen)" stroke="#141c04" stroke-width="0.7" stroke-linejoin="round" />
<path d="M661.5 359.0L661.5 359.0C662.5 357.1 665.2 350.4 667.5 347.5C669.8 344.6 672.2 342.8 675.0 341.5C677.8 340.2 681.5 340.1 684.5 340.0C687.5 339.9 690.1 339.9 693.0 341.0C695.9 342.1 700.4 345.7 701.9 346.6L701.9 346.6C700.6 346.2 697.0 344.5 694.0 344.0C691.0 343.5 687.3 343.1 684.0 343.6C680.7 344.1 676.8 344.9 674.0 347.0C671.2 349.1 668.8 352.8 667.0 356.0C665.2 359.2 664.1 364.3 663.5 366.0L663.5 366.0L661.5 359.0Z" fill="#8a8a82" stroke="#222" stroke-width="0.5" stroke-linejoin="round" />
<ellipse cx="686.2" cy="380.9" rx="24" ry="34.9" transform="rotate(-3 686.2 380.9)" fill="#66b4f2" stroke="#1a3a60" stroke-width="0.7" />
<ellipse cx="686.2" cy="380.7" rx="16.6" ry="25.6" transform="rotate(-3 686.2 380.7)" fill="#4f86c0" />
<ellipse cx="686.2" cy="380.7" rx="16" ry="25" transform="rotate(-3 686.2 380.7)" fill="url(#gHubF)" stroke="#4a5260" stroke-width="0.7" />
<ellipse cx="686.6" cy="381" rx="12.2" ry="19" transform="rotate(-3 686.6 381)" fill="none" stroke="#8792a2" stroke-width="0.8" />
<ellipse cx="686.6" cy="381" rx="7.4" ry="11.4" transform="rotate(-3 686.6 381)" fill="none" stroke="#7e8896" stroke-width="0.7" />
<path d="M683.6 376.8 L689.8 385.6 M689.8 376.8 L683.6 385.6" stroke="#5a626e" stroke-width="0.7"/>
<ellipse cx="686.8" cy="381.2" rx="2.6" ry="3.4" transform="rotate(-3 686.8 381.2)" fill="#8a929e" stroke="#3a3a3a" stroke-width="0.6" />
<path d="M701.9 346.6L701.9 346.6C704.8 345.6 713.1 340.6 719.3 340.4C725.5 340.2 732.1 344.4 739.1 345.4C746.1 346.4 757.8 346.4 761.5 346.6L761.5 346.6C760.6 344.8 758.3 339.4 756.0 336.0C753.7 332.6 749.2 327.7 747.9 326.0L747.9 326.0C757.4 325.1 789.0 322.9 805.1 320.8C821.2 318.7 838.2 314.6 844.8 313.3L844.8 313.3C845.7 314.4 848.5 317.7 850.0 320.0C851.5 322.3 852.3 325.4 853.5 327.0C854.7 328.6 855.3 328.3 857.2 329.5C859.1 330.7 863.0 330.3 864.7 334.4C866.4 338.4 867.3 347.2 867.3 353.8C867.3 360.4 867.6 367.9 864.7 373.7C861.8 379.5 858.1 384.9 849.8 388.6C841.5 392.3 829.9 394.1 815.0 396.0C800.1 397.9 774.1 399.5 760.4 399.7C746.7 399.9 739.6 398.8 733.0 397.3C726.4 395.9 722.7 392.1 720.6 391.0L720.6 391.0C720.0 390.2 718.7 391.2 716.8 386.3C714.9 381.4 711.8 368.1 709.3 361.5C706.8 354.9 703.1 349.1 701.9 346.6Z" fill="url(#gFB)" stroke="#04043a" stroke-width="0.7" stroke-linejoin="round" />
<path d="M705.0 323.0L705.0 323.0C706.9 322.6 712.0 320.9 716.3 320.6C720.6 320.3 726.4 320.4 731.0 321.4C735.6 322.3 740.1 324.0 743.9 326.3C747.7 328.6 750.7 331.8 753.7 335.2C756.7 338.6 760.4 344.7 761.8 346.6L761.8 346.6C759.1 346.3 751.8 345.8 745.6 345.0C739.4 344.2 728.0 342.2 724.5 341.7L724.5 341.7C722.9 340.8 718.0 339.1 714.7 336.0C711.5 332.9 706.6 325.2 705.0 323.0Z" fill="url(#gHL)" stroke="#222" stroke-width="0.7" stroke-linejoin="round" />
<path d="M782.7 340.2L795.7 340.6L814.3 338.4L818.5 339.6L821.7 341.5L827.3 340.6L836.6 335.9L845.9 332.2L845.0 345.2L829.2 351.7L814.3 352.7L793.9 349.9Z" fill="#a2b218" stroke="#10140a" stroke-width="0.8" stroke-linejoin="round" />
<path d="M782.7 340.2L795.7 340.6L797.0 343.0L790.5 345.6Z" fill="#38c8c0" />
<path d="M789.0 342.0L806.0 340.3L806.0 342.8L792.0 344.6Z" fill="#9a9a9a" />
<path d="M836.6 336.4L845.9 332.6L845.2 344.6L838.0 347.0Z" fill="#2c3890" />
<path d="M842.3 339.0L844.6 338.6L844.8 342.0L842.5 342.4Z" fill="#d01818" />
<path d="M788.9 378.6L827.4 376.1L851.0 369.9L852.2 373.7L844.8 383.6L795.1 389.8Z" fill="#a8c81c" stroke="#181c04" stroke-width="0.6" stroke-linejoin="round" />
<path d="M792.0 382.0L830.0 379.6L846.0 375.6L843.5 383.4L795.6 389.4Z" fill="#c814a4" />
<path d="M832.0 378.0L846.0 372.0L851.0 370.5L851.6 373.6L846.0 379.6L834.0 381.6Z" fill="#3858c0" />
<path d="M846.5 371.8L851.0 370.0L851.8 373.0L848.0 375.5Z" fill="#30c040" />
<path d="M738.0 376.1L738.0 376.1C739.7 375.9 744.9 374.5 748.0 374.9C751.1 375.3 754.0 377.2 756.5 378.6C759.0 380.1 762.1 382.0 762.8 383.6C763.4 385.2 762.5 387.5 760.4 388.1C758.3 388.7 753.3 387.8 750.0 387.2C746.7 386.6 742.5 386.6 740.5 384.8C738.5 383.0 738.4 377.6 738.0 376.1Z" fill="#c4e81c" stroke="#181c04" stroke-width="0.6" stroke-linejoin="round" />
<ellipse cx="755.2" cy="383" rx="3.6" ry="3.2" transform="rotate(20 755.2 383)" fill="#2860d8" stroke="#102060" stroke-width="0.5" />
<ellipse cx="759.5" cy="385.8" rx="1.5" ry="1.5" transform="rotate(0 759.5 385.8)" fill="#e02020" />
<path d="M761.5 346.6 L773 349.6" fill="none" stroke="#08087a" stroke-width="0.8"/><path d="M764 349 C772 357 780 368 786 379" fill="none" stroke="#3434f6" stroke-width="1.2" opacity="0.7"/><path d="M715 352 C728 347.5 745 348 758 351" fill="none" stroke="#2c2cf4" stroke-width="2.5" opacity="0.6"/>
<path d="M808.0 396.6L822.0 395.2L834.0 392.4L830.0 396.2L818.0 399.0L810.0 399.0Z" fill="#38b8c8" />
<rect x="498.5" y="287" width="8.5" height="7" transform="rotate(14 502 290)" fill="none" stroke="#0a200a" stroke-width="0.7"/>
<rect x="526.5" y="311" width="8" height="8.5" transform="rotate(14 530 315)" fill="none" stroke="#0a200a" stroke-width="0.7"/>
<path d="M523 331 L552 326.5" fill="none" stroke="#0a200a" stroke-width="0.6"/>
<ellipse cx="496.5" cy="274.5" rx="3.6" ry="4.2" transform="rotate(0 496.5 274.5)" fill="#3f7f36" stroke="#1a3a16" stroke-width="0.5" />
<ellipse cx="575.5" cy="295.5" rx="3.8" ry="4.4" transform="rotate(0 575.5 295.5)" fill="#ffc848" stroke="#a06a08" stroke-width="0.5" />
<path d="M584 309.5 L584.5 312 L591 313.4 M576 325 L589 325 L582 338" fill="none" stroke="#2a1a04" stroke-width="0.7"/></svg></div>
</body></html>
